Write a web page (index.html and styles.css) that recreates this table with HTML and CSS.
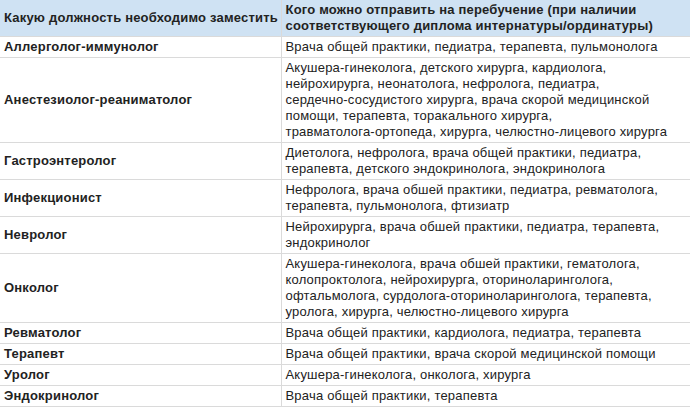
FILE: index.html
```html
<!DOCTYPE html>
<html lang="ru">
<head>
<meta charset="utf-8">
<title>Перебучение</title>
<link rel="stylesheet" href="styles.css">
</head>
<body>
<table class="sheet">
  <colgroup>
    <col class="col-post">
    <col class="col-who">
  </colgroup>
  <thead>
    <tr>
      <th class="head-post">Какую должность необходимо заместить</th>
      <th>Кого можно отправить на перебучение (при наличии соответствующего диплома интернатуры/ординатуры)</th>
    </tr>
  </thead>
  <tbody>
    <tr><td class="post">Аллерголог-иммунолог</td><td>Врача общей практики, педиатра, терапевта, пульмонолога</td></tr>
    <tr><td class="post">Анестезиолог-реаниматолог</td><td><span class="nb">Акушера-гинеколога,</span> детского хирурга, кардиолога, нейрохирурга, неонатолога, нефролога, педиатра, <span class="nb">сердечно-сосудистого</span> хирурга, врача скорой медицинской помощи, терапевта, торакального хирурга, <span class="nb">травматолога-ортопеда,</span> хирурга, <span class="nb">челюстно-лицевого</span> хирурга</td></tr>
    <tr><td class="post">Гастроэнтеролог</td><td>Диетолога, нефролога, врача общей практики, педиатра, терапевта, детского эндокринолога, эндокринолога</td></tr>
    <tr><td class="post">Инфекционист</td><td>Нефролога, врача обшей практики, педиатра, ревматолога, терапевта, пульмонолога, фтизиатр</td></tr>
    <tr><td class="post">Невролог</td><td>Нейрохирурга, врача обшей практики, педиатра, терапевта, эндокринолог</td></tr>
    <tr><td class="post">Онколог</td><td><span class="nb">Акушера-гинеколога,</span> врача обшей практики, гематолога, колопроктолога, нейрохирурга, оториноларинголога, офтальмолога, <span class="nb">сурдолога-оториноларинголога,</span> терапевта, уролога, хирурга, <span class="nb">челюстно-лицевого</span> хирурга</td></tr>
    <tr><td class="post">Ревматолог</td><td>Врача общей практики, кардиолога, педиатра, терапевта</td></tr>
    <tr><td class="post">Терапевт</td><td>Врача общей практики, врача скорой медицинской помощи</td></tr>
    <tr><td class="post">Уролог</td><td><span class="nb">Акушера-гинеколога,</span> онколога, хирурга</td></tr>
    <tr><td class="post">Эндокринолог</td><td>Врача общей практики, терапевта</td></tr>
  </tbody>
</table>
</body>
</html>
```

FILE: styles.css
```css
html, body {
  margin: 0;
  padding: 0;
  background: #ffffff;
  overflow: hidden;
}

.sheet {
  width: 690px;
  table-layout: fixed;
  border-collapse: collapse;
  font-family: "Liberation Sans", Arial, sans-serif;
  font-size: 13px;
  line-height: 16px;
  letter-spacing: 0.2px;
  color: #222222;
}

.col-post { width: 281px; }

.sheet th,
.sheet td {
  padding: 2px 4px 2px 4px;
  border-bottom: 1px solid #dadada;
  border-right: 1px solid #dadada;
  vertical-align: middle;
  text-align: left;
}

.sheet th {
  background: #cfe2f3;
  font-weight: bold;
}

.sheet th.head-post {
  white-space: nowrap;
  overflow: hidden;
}

.sheet td.post {
  font-weight: bold;
}

.nb {
  white-space: nowrap;
}

.sheet tr > :last-child {
  border-right: none;
}
```
